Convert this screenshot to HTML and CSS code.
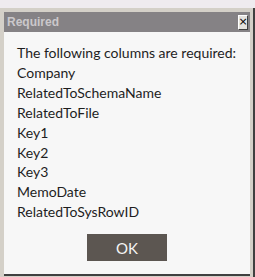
FILE: index.html
```html
<!DOCTYPE html>
<html lang="en">
<head>
    <meta charset="UTF-8">
    <meta name="viewport" content="width=device-width, initial-scale=1.0">
    <title>Required</title>
    <link rel="stylesheet" href="styles.css">
</head>
<body>
    <div class="dialog">
        <div class="titlebar">
            <span class="title">Required</span>
            <button type="button" class="close">&#215;</button>
        </div>
        <div class="content">
            <div class="message">
                <div>The following columns are required:</div>
                <div>Company</div>
                <div>RelatedToSchemaName</div>
                <div>RelatedToFile</div>
                <div>Key1</div>
                <div>Key2</div>
                <div>Key3</div>
                <div>MemoDate</div>
                <div>RelatedToSysRowID</div>
            </div>
            <div class="actions">
                <button type="button" class="ok">OK</button>
            </div>
        </div>
    </div>
</body>
</html>
```

FILE: styles.css
```css
/* Page */
body {
    margin: 0;
    padding-top: 8px;
    background-color: #efebef;
    font-family: Lato, Arial, sans-serif;
    overflow: hidden;
}

/* Dialog frame */
.dialog {
    background-color: #d4d0c8;
    padding: 4px 3px 1px 4px;
    border-right: 2px solid #404040;
    height: 269px;
    box-sizing: border-box;
    display: flex;
    flex-direction: column;
}

.titlebar {
    flex-shrink: 0;
    background-color: #858285;
    height: 20px;
    display: flex;
    align-items: center;
    justify-content: space-between;
    padding: 0 2px 0 3px;
}

.title {
    font-family: "Liberation Sans", Arial, sans-serif;
    font-weight: bold;
    font-size: 12px;
    color: #cbc8cb;
}

.close {
    width: 10px;
    height: 15px;
    padding: 0;
    margin: 0;
    background-color: #e4e2de;
    border: 1px solid;
    border-color: #ffffff #404040 #404040 #ffffff;
    font-family: "DejaVu Sans", sans-serif;
    font-size: 11px;
    line-height: 12px;
    color: #000;
    display: flex;
    align-items: center;
    justify-content: center;
}

/* Content */
.content {
    flex: 1;
    min-height: 0;
    background-color: #f7f7f7;
    border-bottom: 2px solid #404040;
    padding: 11px 8px 0 13px;
}

.message {
    font-size: 14px;
    line-height: 19.9px;
    color: #1e1e1e;
    white-space: nowrap;
}

.actions {
    display: flex;
    justify-content: center;
    margin-top: 12px;
    padding-right: 5px;
}

.ok {
    width: 80px;
    height: 27px;
    background-color: #5c5651;
    color: #f4f4f4;
    border: none;
    font-family: Lato, Arial, sans-serif;
    font-size: 15px;
}
```
